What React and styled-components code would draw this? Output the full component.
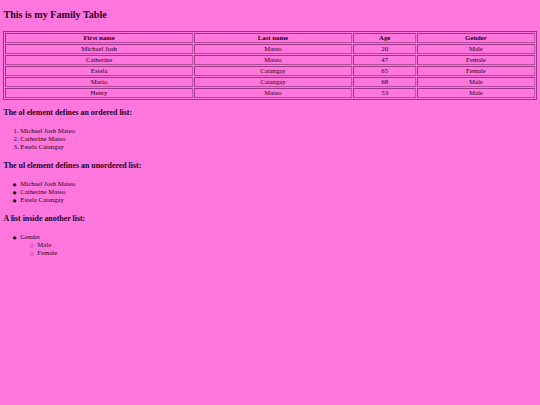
import React from "react";
import styled, { createGlobalStyle } from "styled-components";

const GlobalStyle = createGlobalStyle`
  html, body {
    margin: 0;
    padding: 0;
    background: #ff77dd;
  }
  body {
    font-family: "Liberation Serif", "Times New Roman", serif;
    color: #1f0019;
    font-size: 6.75px;
    line-height: 7.8px;
  }
`;

const Page = styled.div`
  padding: 0 3.4px;
`;

const Title = styled.h2`
  font-size: 10.125px;
  line-height: 11.6px;
  font-weight: bold;
  margin: 9.2px 0 10.2px;
`;

const SectionHeading = styled.h3`
  font-size: 7.9px;
  line-height: 9.2px;
  font-weight: bold;
  margin: 8.5px 0 9.7px;
`;

const Table = styled.table`
  width: 100%;
  border: 1px solid #a0338a;
  border-spacing: 1px;
  border-collapse: separate;
  font-size: 6.75px;
  line-height: 8px;
`;

const HeadCell = styled.th`
  width: ${(p) => p.$w};
  border: 1px solid #a0338a;
  border-right-color: #bb55a5;
  border-bottom-color: #b04a9a;
  padding: 0;
  text-align: center;
  font-weight: bold;
`;

const Cell = styled.td`
  border: 1px solid #a0338a;
  border-right-color: #bb55a5;
  border-bottom-color: #b04a9a;
  padding: 0;
  text-align: center;
`;

const OrderedList = styled.ol`
  margin: 0 0 10.5px;
  padding-left: 16.9px;
`;

const BulletList = styled.ul`
  margin: ${(p) => (p.$nested ? "0" : "0 0 10.5px")};
  padding-left: ${(p) => (p.$nested ? "17px" : "16.9px")};
  list-style-type: ${(p) => (p.$nested ? "circle" : "disc")};

  & > li::marker {
    content: ${(p) =>
      p.$nested ? '"\\25CB\\00a0\\00a0\\00a0"' : '"\\25CF\\00a0\\00a0\\00a0"'};
    font-family: "DejaVu Sans", sans-serif;
    font-size: 4.2px;
  }
`;

const columns = [
  { label: "First name", w: "35.6%" },
  { label: "Last name", w: "30.1%" },
  { label: "Age", w: "12%" },
  { label: "Gender", w: "22.3%" },
];

const rows = [
  ["Michael Josh", "Mateo", "20", "Male"],
  ["Catherine", "Mateo", "47", "Female"],
  ["Estela", "Catangay", "65", "Female"],
  ["Mario", "Catangay", "68", "Male"],
  ["Henry", "Mateo", "53", "Male"],
];

const people = ["Michael Josh Mateo", "Catherine Mateo", "Estela Catangay"];

export default function App() {
  return (
    <>
      <GlobalStyle />
      <Page>
        <Title>This is my Family Table</Title>
        <Table>
          <thead>
            <tr>
              {columns.map((c) => (
                <HeadCell key={c.label} $w={c.w}>
                  {c.label}
                </HeadCell>
              ))}
            </tr>
          </thead>
          <tbody>
            {rows.map((r, i) => (
              <tr key={i}>
                {r.map((v, j) => (
                  <Cell key={j}>{v}</Cell>
                ))}
              </tr>
            ))}
          </tbody>
        </Table>

        <SectionHeading>The ol element defines an ordered list:</SectionHeading>
        <OrderedList>
          {people.map((p) => (
            <li key={p}>{p}</li>
          ))}
        </OrderedList>

        <SectionHeading>The ul element defines an unordered list:</SectionHeading>
        <BulletList>
          {people.map((p) => (
            <li key={p}>{p}</li>
          ))}
        </BulletList>

        <SectionHeading>A list inside another list:</SectionHeading>
        <BulletList>
          <li>
            Gender
            <BulletList $nested>
              <li>Male</li>
              <li>Female</li>
            </BulletList>
          </li>
        </BulletList>
      </Page>
    </>
  );
}
